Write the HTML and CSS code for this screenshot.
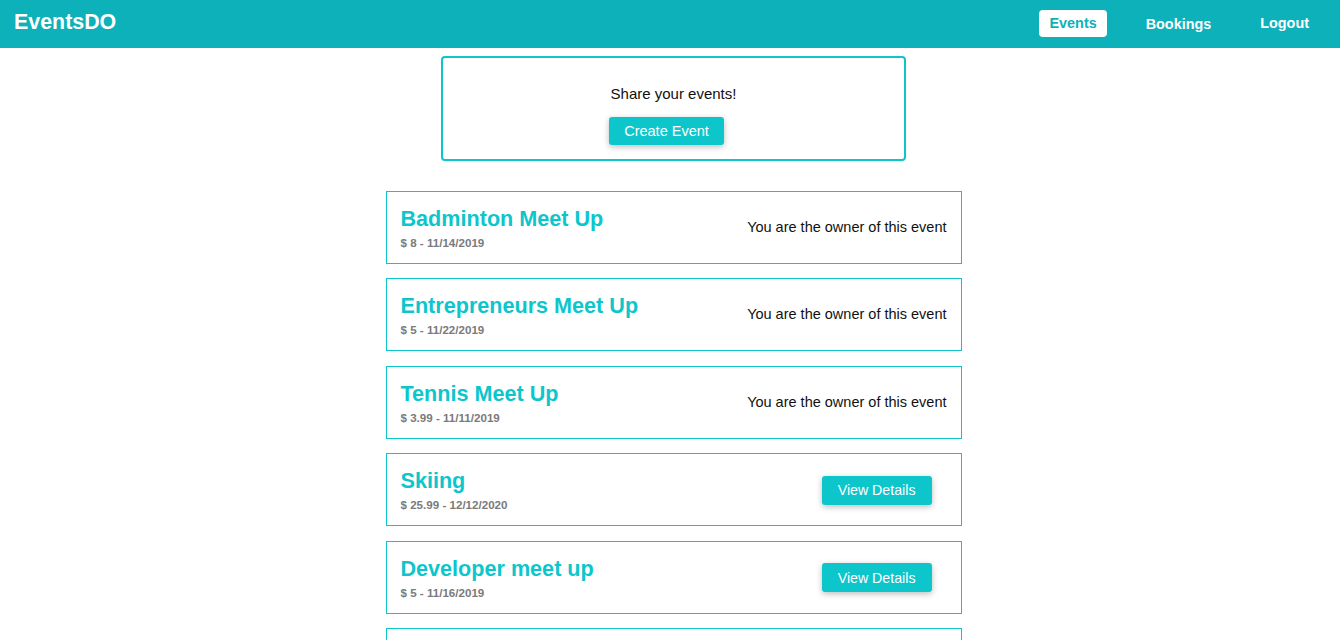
FILE: index.html
```html
<!DOCTYPE html>
<html lang="en">
<head>
    <meta charset="UTF-8" />
    <meta name="viewport" content="width=device-width, initial-scale=1" />
    <title>EventsDO</title>
    <link rel="stylesheet" href="styles.css">
</head>
<body>
<header class="main-nav">
    <div class="main-nav__logo">EventsDO</div>
    <nav class="main-nav__items">
        <a class="nav-link active" href="#">Events</a>
        <a class="nav-link" href="#">Bookings</a>
        <button class="nav-link nav-logout">Logout</button>
    </nav>
</header>

<main class="main-content">
    <div class="events-control">
        <p>Share your events!</p>
        <button class="btn btn-create">Create Event</button>
    </div>

    <ul class="event-list">
        <li class="event-item">
            <div>
                <h1>Badminton Meet Up</h1>
                <h2>$ 8 - 11/14/2019</h2>
            </div>
            <p class="owner">You are the owner of this event</p>
        </li>
        <li class="event-item">
            <div>
                <h1>Entrepreneurs Meet Up</h1>
                <h2>$ 5 - 11/22/2019</h2>
            </div>
            <p class="owner">You are the owner of this event</p>
        </li>
        <li class="event-item">
            <div>
                <h1>Tennis Meet Up</h1>
                <h2>$ 3.99 - 11/11/2019</h2>
            </div>
            <p class="owner">You are the owner of this event</p>
        </li>
        <li class="event-item">
            <div>
                <h1>Skiing</h1>
                <h2>$ 25.99 - 12/12/2020</h2>
            </div>
            <button class="btn btn-details">View Details</button>
        </li>
        <li class="event-item">
            <div>
                <h1>Developer meet up</h1>
                <h2>$ 5 - 11/16/2019</h2>
            </div>
            <button class="btn btn-details">View Details</button>
        </li>
        <li class="event-item">
            <div>
                <h1>Running Club</h1>
                <h2>$ 0 - 11/30/2019</h2>
            </div>
            <button class="btn btn-details">View Details</button>
        </li>
    </ul>
</main>
</body>
</html>
```

FILE: styles.css
```css
:root {
    --nav: #0db1b9;
    --accent: #0cc6cc;
    --text: #111;
    --muted: #7a7a7a;
}
html, body {
    margin: 0;
    font-family: "Liberation Sans", Arial, sans-serif;
    color: var(--text);
}
.main-nav {
    height: 48px;
    background-color: var(--nav);
    display: flex;
    align-items: center;
    justify-content: space-between;
    padding: 0 21px 0 14px;
}
.main-nav__logo {
    color: #fff;
    font-weight: bold;
    font-size: 21.4px;
    margin-top: -3px;
}
.main-nav__items {
    display: flex;
    align-items: center;
    gap: 29px;
}
.nav-link {
    color: #fff;
    text-decoration: none;
    font-weight: bold;
    font-size: 14.4px;
    line-height: 27px;
    padding: 0 10px;
    border-radius: 4px;
}
.nav-link.active {
    background-color: #fff;
    color: var(--nav);
    margin-top: -1px;
}
.nav-logout {
    background: none;
    border: none;
    font-family: inherit;
    margin-top: -2px;
    cursor: pointer;
}
.main-content {
    padding-left: 7px;
}
.events-control {
    width: 461px;
    margin: 8px auto 0;
    border: 2px solid var(--accent);
    border-radius: 4px;
    text-align: center;
    padding: 27px 0 14px;
}
.events-control p {
    margin: 0 0 15px;
    font-size: 15px;
    line-height: 17px;
}
.btn {
    background-color: var(--accent);
    color: #fff;
    border: none;
    border-radius: 3px;
    font-family: inherit;
    font-size: 14.5px;
    height: 28px;
    padding: 0 15px;
    box-shadow: 0 2px 6px rgba(0, 0, 0, 0.26);
    cursor: pointer;
}
.btn-create {
    margin-right: 14px;
}
.event-list {
    list-style: none;
    width: 576px;
    margin: 30px auto 0;
    padding: 0;
}
.event-item {
    box-sizing: border-box;
    display: flex;
    justify-content: space-between;
    align-items: center;
    border: 1px solid var(--accent);
    padding: 14px 14px 13px;
    margin-bottom: 14.4px;
}
.event-item h1 {
    margin: 0 0 4px;
    font-size: 21.6px;
    line-height: 26px;
    color: var(--accent);
}
.event-item h2 {
    margin: 0;
    font-size: 11.6px;
    line-height: 14px;
    color: var(--muted);
}
.owner {
    margin: 0 0 2px;
    font-size: 14.5px;
}
.btn-details {
    font-size: 14.2px;
    height: 29px;
    padding: 0 16px;
    margin-right: 15px;
}
```
